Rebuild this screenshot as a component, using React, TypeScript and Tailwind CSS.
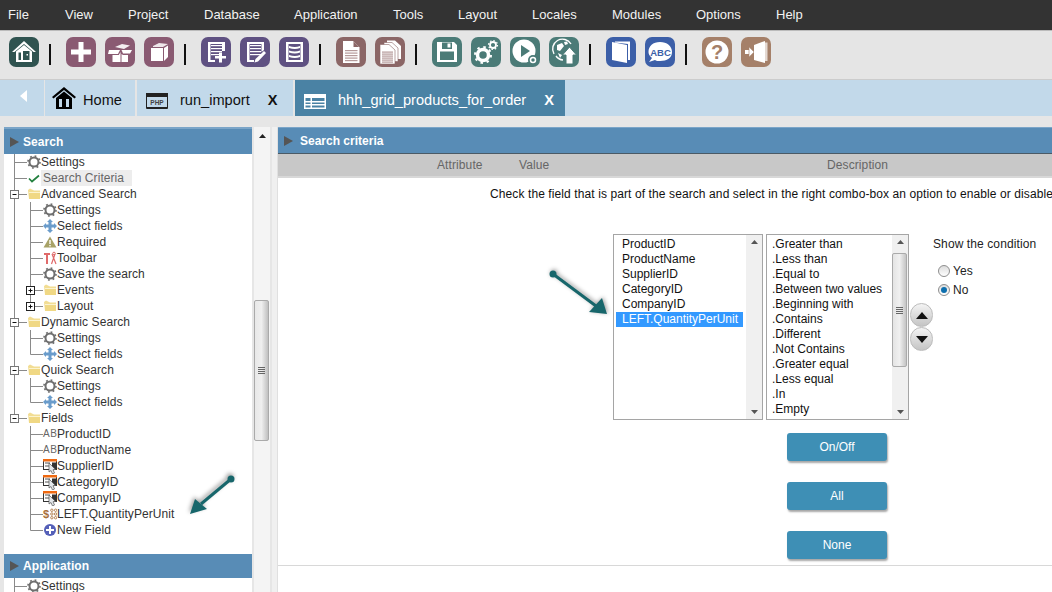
import React from "react";

const menu = [
  { name: "File", cls: "w-[65px] pl-2" },
  { name: "View", cls: "w-[63px]" },
  { name: "Project", cls: "w-[76px]" },
  { name: "Database", cls: "w-[90px]" },
  { name: "Application", cls: "w-[99px]" },
  { name: "Tools", cls: "w-[65px]" },
  { name: "Layout", cls: "w-[74px]" },
  { name: "Locales", cls: "w-[80px]" },
  { name: "Modules", cls: "w-[84px]" },
  { name: "Options", cls: "w-[80px]" },
  { name: "Help", cls: "" },
];

function Tool({ bg, children }: { bg: string; children: React.ReactNode }) {
  return (
    <div className={`w-[30px] h-[30px] rounded-[7px] ${bg}`}>
      <svg viewBox="0 0 30 30" width="30" height="30">
        {children}
      </svg>
    </div>
  );
}

function Sep() {
  return <div className="w-[2px] h-[21px] mt-[7px] bg-[#111] ml-[10px] mr-[15px]" />;
}

// document lines used by the purple and brown toolbar icons
function Lines({ x, w, ys, color }: { x: number; w: number; ys: number[]; color: string }) {
  return (
    <>
      {ys.map((y) => (
        <rect key={y} x={x} y={y} width={w} height="1.2" fill={color} />
      ))}
    </>
  );
}

function Toolbar() {
  const plum = "bg-[#8a5a72]";
  const purple = "bg-[#5f5182]";
  const brown = "bg-[#8b6666]";
  const teal = "bg-[#4b7b77]";
  const blue = "bg-[#3c5fa8]";
  const tan = "bg-[#a58069]";
  return (
    <div className="h-[49px] bg-[#e5e5e5] border-t border-[#bbb] flex pl-[9px] pt-[6px] shrink-0">
      <Tool bg="bg-[#2f5350]">
        <path d="M15 4 L27 15 L24.500 15 L15 7 L5.500 15 L3 15 Z" fill="#fff" />
        <path d="M7 14.500 L15 8 L23 14.500 V25 H7 Z M9.500 15.500 V23 H12 V15.500 Z M14 14 V23 H20.500 V14 Z" fill="#fff" fillRule="evenodd" />
        <rect x="17.500" y="17" width="1.500" height="1.500" fill="#fff" />
      </Tool>
      <Sep />
      <div className="flex gap-[9px]">
        <Tool bg={plum}>
          <path d="M12.500 5 H17.500 V12.500 H25 V17.500 H17.500 V25 H12.500 V17.500 H5 V12.500 H12.500 Z" fill="#fff" />
        </Tool>
        <Tool bg={plum}>
          <path d="M10 10 L17 7 L25 8.500 L19 12 Z" fill="#fff" opacity="0.9" />
          <path d="M4 13 H15 L13 17 H3 Z" fill="#fff" />
          <path d="M16.500 13 H27 L25 16.500 H18 Z" fill="#fff" />
          <path d="M7.500 18 H13.800 L15.500 15 V25 H7.500 Z" fill="#fff" />
          <path d="M16.500 17 L18 18 H23 V25 H16.500 Z" fill="#fff" />
        </Tool>
        <Tool bg={plum}>
          <path d="M9 9 L15 6 L24 7 L19 10 H9 Z" fill="#fff" opacity="0.85" />
          <path d="M7 11 H19 V24 H7 Z" fill="#fff" />
          <path d="M20 11 L24 8.500 V20 L20 24 Z" fill="#fff" />
        </Tool>
      </div>
      <Sep />
      <div className="flex gap-[9px]">
        <Tool bg={purple}>
          <path d="M7 5 H24 V14 H21 V7 H9.500 V23 H14 V25 H7 Z" fill="#fff" />
          <Lines x={10} w={11} ys={[8, 11, 14, 17]} color="#fff" />
          <path d="M18 15.500 H21 V19 H25 V21.500 H21 V25.500 H18 V21.500 H14 V19 H18 Z" fill="#fff" />
        </Tool>
        <Tool bg={purple}>
          <path d="M7 5 H24 V13 L21.500 15 V7 H9.500 V23 H14 V25 H7 Z" fill="#fff" />
          <Lines x={10} w={11} ys={[8, 11, 14, 17]} color="#fff" />
          <path d="M24 14 L26 16 L18 24.500 L14.500 25.500 L15.500 22 Z" fill="#fff" />
        </Tool>
        <Tool bg={purple}>
          <path d="M7 5 H24 V25 H7 Z M9.500 7 V23 H21.500 V7 Z" fill="#fff" fillRule="evenodd" />
          <path d="M10 9 Q16 11 21 9 V11 Q16 13 10 11 Z M10 13.500 Q16 15.500 21 13.500 V15.500 Q16 17.500 10 15.500 Z M10 18 Q16 20 21 18 V20 Q16 22 10 20 Z" fill="#fff" />
        </Tool>
      </div>
      <Sep />
      <div className="flex gap-[9px]">
        <Tool bg={brown}>
          <path d="M7 4 H17 L23.500 10.500 V26 H7 Z" fill="#fff" />
          <path d="M17.500 4.500 L23 10 H17.500 Z" fill="#8b6666" />
          <Lines x={9} w={12.5} ys={[13, 15.5, 18, 20.5, 23]} color="#b59a9a" />
        </Tool>
        <Tool bg={brown}>
          <path d="M12 3.500 H20 L26 9 V22 H12 Z" fill="#fff" />
          <path d="M9 5.500 H17 L23 11 V24.500 H9 Z" fill="#fff" stroke="#8b6666" strokeWidth="0.6" />
          <path d="M5 7.500 H14 L20 13 V27 H5 Z" fill="#fff" stroke="#8b6666" strokeWidth="0.6" />
          <Lines x={7} w={11} ys={[14.5, 16.5, 18.5, 20.5, 22.5, 24.5]} color="#b59a9a" />
        </Tool>
      </div>
      <Sep />
      <div className="flex gap-[9px]">
        <Tool bg={teal}>
          <path d="M5 5 H22 L25 8 V25 H5 Z M10 5.500 V12 H20 V5.500 Z M8 14.500 V23 H22 V14.500 Z" fill="#fff" fillRule="evenodd" />
          <rect x="15.500" y="6.500" width="3" height="4" fill="#fff" />
          <rect x="9" y="16" width="12" height="6" fill="#4b7b77" />
        </Tool>
        <Tool bg={teal}>
          <circle cx="12" cy="18" r="5.500" fill="none" stroke="#fff" strokeWidth="3.500" />
          <circle cx="12" cy="18" r="8" fill="none" stroke="#fff" strokeWidth="2" strokeDasharray="2.500 3.800" />
          <circle cx="22" cy="8" r="3" fill="none" stroke="#fff" strokeWidth="1.800" />
          <circle cx="22" cy="8" r="4.500" fill="none" stroke="#fff" strokeWidth="1.200" strokeDasharray="1.500 2" />
        </Tool>
        <Tool bg={teal}>
          <circle cx="14" cy="14" r="11.500" fill="#fff" />
          <path d="M11 8 L20 14 L11 20 Z" fill="#4b7b77" />
          <circle cx="23" cy="23" r="5" fill="#4b7b77" />
          <circle cx="23" cy="23" r="2.500" fill="none" stroke="#fff" strokeWidth="1.500" />
        </Tool>
        <Tool bg={teal}>
          <path d="M5 17 A9.500 9.500 0 0 1 22 7" fill="none" stroke="#fff" strokeWidth="1.400" />
          <path d="M7 19 A9.500 9.500 0 0 0 14 23" fill="none" stroke="#fff" strokeWidth="1.400" />
          <path d="M8 8 L13 6 L15 9 L11 14 L8 13 Z M9 16 L13 18 L11 21 Z M15 5 L18 4.500 L19 7 L16 8 Z" fill="#fff" />
          <path d="M20.500 10 L27.500 18 H24 V27 H17 V18 H13.500 Z" fill="#fff" stroke="#4b7b77" strokeWidth="1" />
        </Tool>
      </div>
      <Sep />
      <div className="flex gap-[9px]">
        <Tool bg={blue}>
          <path d="M6 5 L21 8 V26 L6 23 Z" fill="#fff" />
          <path d="M9 4.500 H24 V23 H22 V7 L9 5.500 Z" fill="#fff" />
        </Tool>
        <Tool bg={blue}>
          <path d="M15 5 C22 5 27 9 27 15 C27 21 22 24 15 24 C13 24 11 24 10 23 L4 25 L7 21 C4.500 19 3.500 17 3.500 15 C3.500 9 8 5 15 5 Z" fill="#fff" />
          <text x="15.500" y="18.500" textAnchor="middle" fontSize="9.500" fontWeight="700" fill="#3c5fa8" fontFamily="'Liberation Sans', sans-serif">ABC</text>
        </Tool>
      </div>
      <Sep />
      <div className="flex gap-[9px]">
        <Tool bg={tan}>
          <circle cx="15" cy="15" r="11.500" fill="#fff" />
          <text x="15" y="22" textAnchor="middle" fontSize="20" fontWeight="700" fill="#a58069" fontFamily="'Liberation Sans', sans-serif">?</text>
        </Tool>
        <Tool bg={tan}>
          <path d="M13 8 L24 4 V26 L13 23 Z" fill="#fff" />
          <path d="M24 5.500 H26.500 V24 H24 Z" fill="#fff" opacity="0.7" />
          <path d="M4 13 H8 V10 L13 15 L8 20 V17 H4 Z" fill="#fff" />
          <path d="M8 10 L13 15 L8 20 Z" fill="#fff" stroke="#a58069" strokeWidth="0.6" />
        </Tool>
      </div>
    </div>
  );
}

function Tabs() {
  return (
    <div className="h-[37px] bg-[#c2d9ea] border-t border-[#ccc] flex shrink-0 text-[14.6px] text-[#111]">
      <div className="w-[45px] border-r border-[#e5e5e5] flex items-center pl-[20px]">
        <svg width="8" height="12" viewBox="0 0 8 12" className="mb-[4px]">
          <path d="M7 0 V12 L0 6 Z" fill="#fff" />
        </svg>
      </div>
      <div className="w-[92px] border-r-2 border-[#e5e5e5] flex items-center pl-[7px] pt-[6px]">
        <svg width="24" height="22" viewBox="0 0 24 22" className="mb-[7px]">
          <path d="M12 0 L24 10 L22.500 11.500 L12 3 L1.500 11.500 L0 10 Z" fill="#000" />
          <path d="M4 11 L12 4.500 L20 11 V22 H4 Z M7 12 V20 H10 V12 Z M14 12 V20 H17 V12 Z" fill="#000" fillRule="evenodd" />
        </svg>
        <span className="ml-[7px]">Home</span>
      </div>
      <div className="w-[158px] border-r-2 border-[#e5e5e5] flex items-center pl-[9px] pt-[6px]">
        <svg width="22" height="16" viewBox="0 0 22 16">
          <path d="M0.500 0.500 H21.500 V15.500 H0.500 Z" fill="none" stroke="#222" />
          <rect x="0" y="0" width="22" height="4" fill="#222" />
          <rect x="1" y="14" width="20" height="2" fill="#222" />
          <text x="11" y="12" textAnchor="middle" fontSize="6.500" fontWeight="700" fill="#444" fontFamily="'Liberation Sans', sans-serif">PHP</text>
        </svg>
        <span className="ml-[12px]">run_import</span>
        <span className="ml-[18px] font-bold">X</span>
      </div>
      <div className="w-[270px] bg-[#4a82a4] text-white flex items-center pl-[9px] pt-[6px]">
        <svg width="22" height="15" viewBox="0 0 22 15">
          <path d="M0 0 H22 V15 H0 Z M1.500 4 V7 H6.500 V4 Z M8 4 V7 H20.500 V4 Z M1.500 8.500 V10 H6.500 V8.500 Z M8 8.500 V10 H20.500 V8.500 Z M1.500 11.500 V13.500 H6.500 V11.500 Z M8 11.500 V13.500 H20.500 V11.500 Z" fill="#fff" fillRule="evenodd" />
        </svg>
        <span className="ml-[12px]">hhh_grid_products_for_order</span>
        <span className="ml-[18px] font-bold">X</span>
      </div>
    </div>
  );
}

function Gear() {
  return (
    <svg width="14" height="14" viewBox="0 0 14 14">
      <circle cx="7" cy="7" r="4.500" fill="#fff" stroke="#6e6e6e" strokeWidth="2" />
      <circle cx="7" cy="7" r="6" fill="none" stroke="#6e6e6e" strokeWidth="1.600" strokeDasharray="1.800 2.900" />
    </svg>
  );
}

function Check() {
  return (
    <svg width="14" height="14" viewBox="0 0 14 14">
      <path d="M2 7.500 L5 10.500 L12 4.500" fill="none" stroke="#23803f" strokeWidth="1.700" />
    </svg>
  );
}

function Folder() {
  return (
    <svg width="14" height="14" viewBox="0 0 14 14">
      <path d="M1 3 L3 1.500 L7 3.500 H13 V12 H2 Z" fill="#f2dd93" />
      <rect x="2" y="5" width="11" height="7" fill="#f0d884" />
      <rect x="2" y="5" width="11" height="1" fill="#fbf3cf" />
    </svg>
  );
}

function Move() {
  return (
    <svg width="14" height="14" viewBox="0 0 14 14">
      <path d="M7 0 L10 3 H8.500 V5.500 H11 V4 L14 7 L11 10 V8.500 H8.500 V11 H10 L7 14 L4 11 H5.500 V8.500 H3 V10 L0 7 L3 4 V5.500 H5.500 V3 H4 Z" fill="#6a9ccb" />
    </svg>
  );
}

function Warn() {
  return (
    <svg width="14" height="14" viewBox="0 0 14 14">
      <path d="M7 1.500 L13.500 12.500 H0.500 Z" fill="#a8a267" />
      <rect x="6.300" y="5" width="1.400" height="4" fill="#fff" />
      <rect x="6.300" y="10" width="1.400" height="1.400" fill="#fff" />
    </svg>
  );
}

function Tools() {
  return (
    <svg width="14" height="14" viewBox="0 0 14 14">
      <path d="M1 2 H7 V4 H5 V13 H3 V4 H1 Z" fill="#e06a6a" />
      <path d="M9 3 L13 13 M12 3 L8.500 13" fill="none" stroke="#e06a6a" strokeWidth="1.200" />
      <circle cx="11" cy="2.500" r="1.300" fill="none" stroke="#e06a6a" />
    </svg>
  );
}

function Ab() {
  return (
    <span className="w-[14px] text-[10px] text-[#666] leading-none text-center tracking-[0.5px]">AB</span>
  );
}

function Combo() {
  return (
    <svg width="16" height="16" viewBox="0 0 16 16" className="-ml-[1px] shrink-0">
      <rect x="1.500" y="1.500" width="13" height="10" fill="#fff" stroke="#333" />
      <rect x="1" y="1" width="14" height="2.500" fill="#ef6a12" />
      <rect x="10" y="4.500" width="4" height="6.500" fill="#333" />
      <path d="M3 5 H8 M3 8 H7" stroke="#555" />
      <path d="M7 5 L7 14 L9 12.500 L10.500 16 L12.500 15 L11 11.800 L13.500 11.500 Z" fill="#e4e8ec" stroke="#555" strokeWidth="0.700" />
    </svg>
  );
}

function Calc() {
  return (
    <span className="flex items-center w-[14px] shrink-0">
      <span className="text-[11px] font-bold text-[#a8703a] leading-none w-[7px]">$</span>
      <svg width="8" height="12" viewBox="0 0 8 12">
        {[2, 6, 10].map((y) => (
          <g key={y} fill="none" stroke="#a8703a" strokeWidth="0.900">
            <circle cx="2" cy={y} r="1.300" />
            <circle cx="6" cy={y} r="1.300" />
          </g>
        ))}
      </svg>
    </span>
  );
}

function NewField() {
  return (
    <svg width="14" height="14" viewBox="0 0 14 14">
      <circle cx="7" cy="7" r="6" fill="#5560b8" />
      <path d="M6 3 H8 V6 H11 V8 H8 V11 H6 V8 H3 V6 H6 Z" fill="#fff" />
    </svg>
  );
}

const iconMap: Record<string, React.ReactNode> = {
  gear: <Gear />,
  check: <Check />,
  folder: <Folder />,
  move: <Move />,
  warn: <Warn />,
  tools: <Tools />,
  ab: <Ab />,
  combo: <Combo />,
  calc: <Calc />,
  plus: <NewField />,
};

type Row = {
  level: 1 | 2;
  icon: string;
  label: string;
  box?: "+" | "-";
  last?: boolean;
  active?: boolean;
};

// connector lines drawn in front of each tree row
function Connector({ row, closed }: { row: Row; closed?: boolean }) {
  const w = row.level === 1 ? 23 : 39;
  const c = "#8a8a8a";
  const x = row.level === 1 ? 10.5 : 26.5;
  return (
    <svg width={w} height="16" viewBox={`0 0 ${w} 16`} className="shrink-0">
      {row.level === 2 && !closed && <path d="M10.500 0 V16" stroke={c} />}
      <path d={row.last ? `M${x} 0 V8.500` : `M${x} 0 V16`} stroke={c} fill="none" />
      <path d={`M${x} 8.500 H${w}`} stroke={c} />
      {row.box && (
        <g>
          <rect x={x - 4} y="4.500" width="8" height="8" fill="#fff" stroke={row.level === 1 ? "#777" : "#222"} />
          <path d={`M${x - 2} 8.500 H${x + 2}`} stroke="#111" />
          {row.box === "+" && <path d={`M${x} 6.500 V10.500`} stroke="#111" />}
        </g>
      )}
    </svg>
  );
}

function TreeRow({ row, closed }: { row: Row; closed?: boolean }) {
  return (
    <div className="h-4 flex items-center whitespace-nowrap">
      <Connector row={row} closed={closed} />
      <span className="w-[14px] h-[14px] flex items-center justify-center shrink-0">{iconMap[row.icon]}</span>
      <span className={row.active ? "bg-[#ededed] text-[#666] pl-[2px] pr-2 h-4 leading-4" : "leading-4"}>
        {row.label}
      </span>
    </div>
  );
}

const tree: Row[] = [
  { level: 1, icon: "gear", label: "Settings" },
  { level: 1, icon: "check", label: "Search Criteria", active: true },
  { level: 1, icon: "folder", label: "Advanced Search", box: "-" },
  { level: 2, icon: "gear", label: "Settings" },
  { level: 2, icon: "move", label: "Select fields" },
  { level: 2, icon: "warn", label: "Required" },
  { level: 2, icon: "tools", label: "Toolbar" },
  { level: 2, icon: "gear", label: "Save the search" },
  { level: 2, icon: "folder", label: "Events", box: "+" },
  { level: 2, icon: "folder", label: "Layout", box: "+", last: true },
  { level: 1, icon: "folder", label: "Dynamic Search", box: "-" },
  { level: 2, icon: "gear", label: "Settings" },
  { level: 2, icon: "move", label: "Select fields", last: true },
  { level: 1, icon: "folder", label: "Quick Search", box: "-" },
  { level: 2, icon: "gear", label: "Settings" },
  { level: 2, icon: "move", label: "Select fields", last: true },
  { level: 1, icon: "folder", label: "Fields", box: "-", last: true },
  { level: 2, icon: "ab", label: "ProductID" },
  { level: 2, icon: "ab", label: "ProductName" },
  { level: 2, icon: "combo", label: "SupplierID" },
  { level: 2, icon: "combo", label: "CategoryID" },
  { level: 2, icon: "combo", label: "CompanyID" },
  { level: 2, icon: "calc", label: "LEFT.QuantityPerUnit" },
  { level: 2, icon: "plus", label: "New Field", last: true },
];

function PanelHeader({ label, cls, iconCls }: { label: string; cls: string; iconCls: string }) {
  return (
    <div className={`bg-[#588cb6] text-white font-bold text-[12px] flex items-center pl-[6px] ${cls}`}>
      <svg width="9" height="10" viewBox="0 0 9 10" className={iconCls}>
        <path d="M0 0 L9 5 L0 10 Z" fill="#555" />
      </svg>
      {label}
    </div>
  );
}

function Arrow({ d, head, cx, cy }: { d: string; head: string; cx: number; cy: number }) {
  return (
    <g>
      <path d={d} stroke="#17666b" strokeWidth="3" />
      <path d={head} fill="#17666b" />
      <circle cx={cx} cy={cy} r="3.500" fill="#17666b" />
    </g>
  );
}

function Sidebar() {
  return (
    <div className="relative w-[248px] ml-1 bg-white shrink-0 overflow-hidden text-[12px] text-[#333] tracking-[0.07px]">
      <PanelHeader label="Search" cls="h-[27px] border-t-2 border-[#7ba5c8]" iconCls="mr-[4px]" />
      {tree.map((r, i) => (
        <TreeRow key={i} row={r} closed={i > 16} />
      ))}
      <div className="h-4" />
      <PanelHeader label="Application" cls="h-6" iconCls="mr-[4px]" />
      <TreeRow row={{ level: 1, icon: "gear", label: "Settings" }} />
      {/* annotation arrow over the tree */}
      <svg
        width="60"
        height="50"
        viewBox="0 0 60 50"
        className="absolute left-[180px] top-[343px] drop-shadow-[-1px_-2px_2px_rgba(0,0,0,0.4)]"
      >
        <Arrow d="M47 9 L17 34" head="M6 44 L11 29 L23 39 Z" cx={47} cy={9} />
      </svg>
    </div>
  );
}

function ScrollArrows({ children }: { children?: React.ReactNode }) {
  return (
    <div className="w-4 bg-[#f0f0f0] flex flex-col items-center justify-between py-[5px] shrink-0 relative">
      <svg width="7" height="4" viewBox="0 0 7 4">
        <path d="M3.500 0 L7 4 H0 Z" fill="#555" />
      </svg>
      {children}
      <svg width="7" height="4" viewBox="0 0 7 4">
        <path d="M3.500 4 L7 0 H0 Z" fill="#555" />
      </svg>
    </div>
  );
}

function Grip() {
  return (
    <span className="flex flex-col gap-[1px]">
      <span className="block w-[7px] h-px bg-[#666]" />
      <span className="block w-[7px] h-px bg-[#666]" />
      <span className="block w-[7px] h-px bg-[#666]" />
      <span className="block w-[7px] h-px bg-[#666]" />
    </span>
  );
}

function ListBox({ items, width, selected, thumb }: { items: string[]; width: string; selected?: number; thumb?: boolean }) {
  return (
    <div className={`h-[186px] border border-[#a5a5a5] flex bg-white overflow-hidden ${width}`}>
      <div className="flex-1 pt-[2px] pl-[2px] min-w-0">
        {items.map((it, i) => (
          <div
            key={it}
            className={`h-[15px] leading-[15px] whitespace-nowrap ${
              selected !== undefined ? "pl-[6px] mr-[3px]" : "pl-[3px]"
            } ${i === selected ? "bg-[#3399ff] text-white" : "text-[#111]"}`}
          >
            {it}
          </div>
        ))}
      </div>
      <ScrollArrows>
        {thumb && (
          <div className="absolute left-0 top-[18px] w-[15px] h-[114px] rounded-[2px] border border-[#aaa] bg-gradient-to-r from-[#e4e4e4] via-[#f0f0f0] to-[#c4c4c4] flex items-center justify-center">
            <Grip />
          </div>
        )}
      </ScrollArrows>
    </div>
  );
}

function RoundBtn({ up }: { up?: boolean }) {
  return (
    <div className="w-[23px] h-6 rounded-full border border-[#bbb] bg-gradient-to-b from-[#f4f4f4] to-[#c4c4c4] flex items-center justify-center">
      <svg width="12" height="7" viewBox="0 0 12 7">
        <path d={up ? "M6 0 L12 7 H0 Z" : "M6 7 L12 0 H0 Z"} fill="#111" />
      </svg>
    </div>
  );
}

function Radio({ on }: { on?: boolean }) {
  return (
    <span className="w-3 h-3 rounded-full border border-[#8e8e8e] bg-gradient-to-b from-[#dcdcdc] to-[#fff] flex items-center justify-center shrink-0">
      {on && <span className="w-[6px] h-[6px] rounded-full bg-[#0d6fae]" />}
    </span>
  );
}

function ActionBtn({ label }: { label: string }) {
  return (
    <div className="w-[100px] h-[28px] rounded-[3px] bg-[#3e8fb5] shadow-[1px_2px_2px_rgba(0,0,0,0.35)] text-white text-[12px] flex items-center justify-center">
      {label}
    </div>
  );
}

function Content() {
  return (
    <div className="flex-1 min-w-0 bg-white border-l border-[#e0e0e0] overflow-hidden text-[12px] relative">
      <PanelHeader
        label="Search criteria"
        cls="h-[27px] border-t border-[#7ba5c8] border-b border-b-[#4a5a66]"
        iconCls="mr-[7px]"
      />
      <div className="h-[22px] bg-[#c8c8c8] text-[#666] flex items-center tracking-[0.1px]">
        <span className="ml-[159px] w-[82px]">Attribute</span>
        <span className="w-[308px]">Value</span>
        <span>Description</span>
      </div>
      <div className="h-[2px] bg-[#d8d8d8]" />
      <div className="h-[388px] border-b border-[#d8d8d8]">
        <div className="pt-[8px] pl-[212px] whitespace-nowrap text-[#111] h-[56px] leading-[16px] tracking-[0.1px]">
          Check the field that is part of the search and select in the right combo-box an option to enable or disable
        </div>
        <div className="flex pl-[335px]">
          <ListBox
            width="w-[150px]"
            selected={5}
            items={["ProductID", "ProductName", "SupplierID", "CategoryID", "CompanyID", "LEFT.QuantityPerUnit"]}
          />
          <div className="w-[143px] ml-[3px]">
            <ListBox
              width="w-[143px]"
              thumb
              items={[
                ".Greater than",
                ".Less than",
                ".Equal to",
                ".Between two values",
                ".Beginning with",
                ".Contains",
                ".Different",
                ".Not Contains",
                ".Greater equal",
                ".Less equal",
                ".In",
                ".Empty",
              ]}
            />
            <div className="flex flex-col items-start pl-[21px] gap-[21px] mt-[13px]">
              <ActionBtn label="On/Off" />
              <ActionBtn label="All" />
              <ActionBtn label="None" />
            </div>
          </div>
          <div className="ml-[1px] pt-[69px] flex flex-col">
            <RoundBtn up />
            <RoundBtn />
          </div>
          <div className="text-[#222] tracking-[0.1px]">
            <div className="pt-[2px] h-[28px] leading-[16px] whitespace-nowrap">Show the condition</div>
            <div className="pl-[5px] pt-[2px] flex flex-col gap-[5px]">
              <label className="flex items-center gap-[3px] h-[14px]">
                <Radio />
                Yes
              </label>
              <label className="flex items-center gap-[3px] h-[14px]">
                <Radio on />
                No
              </label>
            </div>
          </div>
        </div>
      </div>
      <svg
        width="70"
        height="55"
        viewBox="0 0 70 55"
        className="absolute left-[268px] top-[142px] drop-shadow-[1px_-1px_2px_rgba(0,0,0,0.4)]"
      >
        <Arrow d="M7 5 L50 37" head="M61 45 L43 43 L56 29 Z" cx={7} cy={5} />
      </svg>
    </div>
  );
}

export default function App() {
  return (
    <div className="w-[1052px] h-[592px] overflow-hidden flex flex-col bg-[#e6e6e6] font-['Liberation_Sans',Arial,sans-serif]">
      <div className="h-[30px] bg-[#333] text-[#f2f2f2] text-[13px] flex items-center shrink-0">
        {menu.map((m) => (
          <span key={m.name} className={m.cls}>
            {m.name}
          </span>
        ))}
      </div>
      <Toolbar />
      <Tabs />
      <div className="flex-1 flex pt-[11px] min-h-0">
        <Sidebar />
        <div className="w-[18px] ml-[2px] shrink-0">
          <div className="w-4 h-full bg-[#f4f4f4] relative flex flex-col items-center pt-[7px]">
            <svg width="7" height="4" viewBox="0 0 7 4">
              <path d="M3.500 0 L7 4 H0 Z" fill="#222" />
            </svg>
            <div className="absolute left-0 top-[173px] w-[15px] h-[141px] rounded-[2px] border border-[#aaa] bg-gradient-to-r from-[#e8e8e8] via-[#efefef] to-[#c0c0c0] flex items-center justify-center">
              <Grip />
            </div>
          </div>
        </div>
        <div className="w-[5px] shrink-0 bg-[#f0f0f0]" />
        <Content />
      </div>
    </div>
  );
}
